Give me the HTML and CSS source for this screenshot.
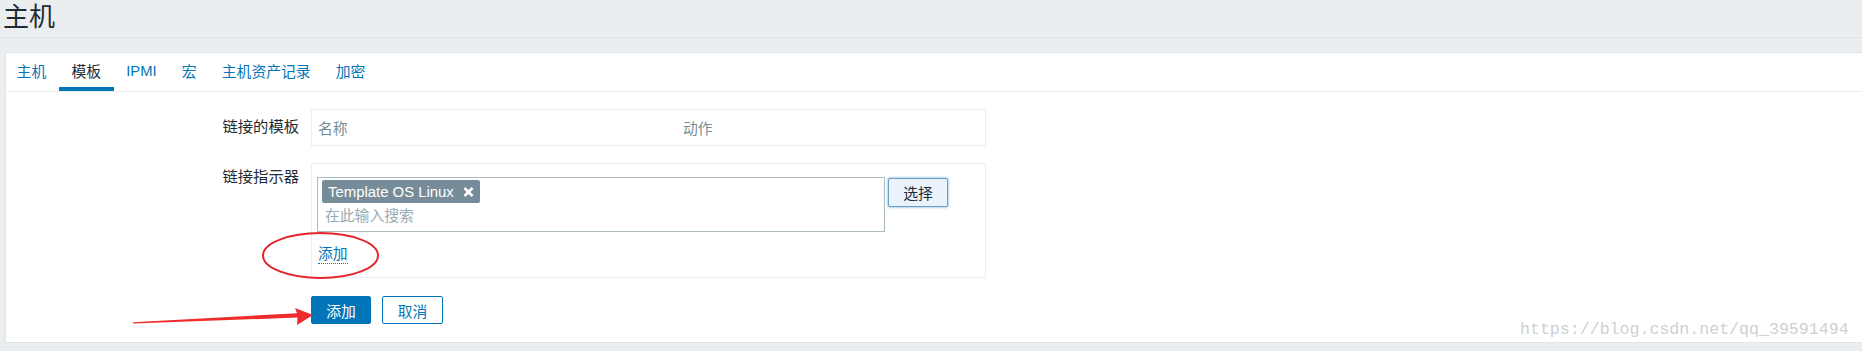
FILE: index.html
```html
<!DOCTYPE html>
<html lang="zh-CN">
<head>
<meta charset="utf-8">
<title>主机</title>
<link rel="stylesheet" href="styles.css">
</head>
<body>
<header class="page-header">
  <h1 class="page-title">主机</h1>
</header>
<main class="card">
  <nav class="tabs">
    <a class="tab">主机</a>
    <a class="tab tab-active">模板</a>
    <a class="tab">IPMI</a>
    <a class="tab">宏</a>
    <a class="tab">主机资产记录</a>
    <a class="tab">加密</a>
  </nav>
  <form class="form">
    <div class="label label-row1">链接的模板</div>
    <div class="box box-table">
      <span class="th th-name">名称</span>
      <span class="th">动作</span>
    </div>

    <div class="label label-row2">链接指示器</div>
    <div class="box box-link">
      <div class="ms-row">
        <div class="multiselect">
          <div class="tags">
            <span class="tag">Template OS Linux
              <svg class="tag-x" width="11" height="10" viewBox="0 0 11 10"><path d="M1.5 1 L9.5 9 M9.5 1 L1.5 9" stroke="#fff" stroke-width="2.6" stroke-linecap="butt"/></svg>
            </span>
          </div>
          <div class="ms-input">在此输入搜索</div>
        </div>
        <button type="button" class="btn-select">选择</button>
      </div>
      <a class="link-add">添加</a>
    </div>

    <div class="label"></div>
    <div class="actions">
      <button type="button" class="btn btn-primary">添加</button>
      <button type="button" class="btn btn-cancel">取消</button>
    </div>
  </form>
</main>
<div class="watermark">https://blog.csdn.net/qq_39591494</div>
<svg class="annotations" width="1862" height="351" viewBox="0 0 1862 351">
  <ellipse cx="320.5" cy="255.5" rx="57.5" ry="22.5" fill="none" stroke="#e3262b" stroke-width="2"/>
  <polygon points="133,322.3 297,313.2 295,308 313,315 297,325 297.5,317.6 133,323.6" fill="#ef2b2b"/>
</svg>
</body>
</html>
```
FILE: styles.css
```css
html, body {
  margin: 0;
  padding: 0;
}
body {
  position: relative;
  width: 1862px;
  height: 351px;
  overflow: hidden;
  background: #ebeef1;
  font-family: "Liberation Sans", Arial, "Noto Sans CJK SC", sans-serif;
  font-size: 14.8px;
  color: #1f2c33;
}
.page-header {
  height: 37px;
  border-bottom: 1px solid #dde2e6;
  box-shadow: 0 -4px 0 -3px #f1f3f5 inset;
}
.page-title {
  margin: 0;
  padding-left: 3px;
  font-size: 26px;
  font-weight: normal;
  line-height: 34px;
  color: #1f2c33;
}
.card {
  margin: 14px 0 0 5px;
  background: #fff;
  border: 1px solid #dfe4e7;
  border-right: none;
  height: 291px;
  box-sizing: border-box;
}
.tabs {
  display: flex;
  height: 39px;
  margin-left: -2px;
  border-bottom: 1px solid #ebeef1;
  box-sizing: border-box;
}
.tab {
  display: flex;
  align-items: center;
  padding: 0 12.6px 3px;
  color: #0275b8;
  cursor: pointer;
  box-sizing: border-box;
}
.tab-active {
  color: #1f2c33;
  border-bottom: 4px solid #0275b8;
  padding-bottom: 0;
}
.form {
  display: grid;
  grid-template-columns: 293px 675px;
  column-gap: 12px;
  row-gap: 17px;
  padding: 17px 0 0 0;
}
.label {
  text-align: right;
  line-height: 18px;
  font-size: 15.3px;
}
.label-row1 { padding-top: 9px; }
.label-row2 { padding-top: 5px; }
.box {
  border: 1px solid #e9edf0;
  box-sizing: border-box;
}
.box-table {
  height: 37px;
  display: flex;
  align-items: center;
  padding-left: 6px;
  color: #768d99;
}
.th-name {
  width: 365px;
}
.box-link {
  height: 115px;
  padding: 13px 0 0 5px;
}
.ms-row {
  display: flex;
  align-items: flex-start;
}
.multiselect {
  width: 568px;
  height: 55px;
  border: 1px solid #acbbc2;
  box-sizing: border-box;
  padding: 2px 0 0 4px;
}
.tags {
  display: flex;
  height: 23px;
}
.tag {
  display: flex;
  align-items: center;
  height: 23px;
  box-sizing: border-box;
  padding: 0 6px 0 6px;
  background: #768d99;
  color: #fff;
  border-radius: 2px;
  font-size: 14.9px;
}
.tag-x {
  margin-left: 9px;
}
.ms-input {
  height: 27px;
  line-height: 27px;
  padding-left: 3px;
  color: #9aabb3;
}
.btn-select {
  margin: 1px 0 0 3px;
  width: 60px;
  height: 29px;
  box-sizing: border-box;
  border: 1px solid #6d9fc6;
  border-radius: 2px;
  background: #eaf3fb;
  box-shadow: 0 0 2px 1px rgba(2, 117, 184, 0.3);
  font: inherit;
  color: #1f2c33;
  padding: 0;
}
.link-add {
  display: inline-block;
  margin: 14px 0 0 1px;
  line-height: 17px;
  color: #0275b8;
  border-bottom: 1px dotted #0275b8;
}
.actions {
  display: flex;
  gap: 11px;
  margin-top: 1px;
}
.btn {
  height: 28px;
  box-sizing: border-box;
  border-radius: 2px;
  font: inherit;
  padding: 0;
}
.btn-primary {
  width: 60px;
  background: #0275b8;
  border: 1px solid #0275b8;
  color: #fff;
}
.btn-cancel {
  width: 61px;
  background: #fff;
  border: 1px solid #0275b8;
  color: #0275b8;
}
.watermark {
  position: absolute;
  left: 1520px;
  top: 320px;
  font-family: "Liberation Mono", "DejaVu Sans Mono", monospace;
  font-size: 16.6px;
  line-height: 20px;
  color: #cdd1d4;
  white-space: nowrap;
}
.annotations {
  position: absolute;
  left: 0;
  top: 0;
  pointer-events: none;
}
```
